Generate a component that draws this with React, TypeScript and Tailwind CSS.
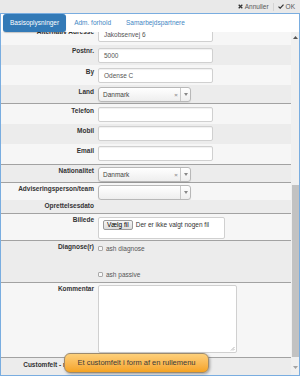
import React from "react";

const font = "font-['Liberation_Sans',Arial,sans-serif]";

function Row({
  label,
  tone,
  h,
  line,
  lpt = "pt-[3px]",
  children,
  extra = "",
}: {
  label: string;
  tone: "light" | "dark";
  h: string;
  line?: boolean;
  lpt?: string;
  children?: React.ReactNode;
  extra?: string;
}) {
  return (
    <div
      className={`flex shrink-0 ${h} ${tone === "light" ? "bg-[#f6f6f6]" : "bg-[#ececec]"} ${
        line ? "border-b border-[#a2a2a2]" : ""
      } ${extra}`}
    >
      <div className={`w-[93px] shrink-0 text-right font-bold text-[#333] leading-[8px] whitespace-nowrap ${lpt}`}>
        {label}
      </div>
      <div className="ml-[4px] pt-[2px]">{children}</div>
    </div>
  );
}

function TextInput({ value = "" }: { value?: string }) {
  return (
    <div className="w-[115px] h-[15px] bg-white border border-[#d0d0d0] rounded-[2px] shadow-[inset_0_1px_1px_rgba(0,0,0,0.06)] flex items-center px-[5px] text-[#555]">
      {value}
    </div>
  );
}

function Select({ value, clear = true }: { value?: string; clear?: boolean }) {
  return (
    <div className="w-[93px] h-[15px] flex rounded-[3px] border border-[#b8b8b8] bg-gradient-to-b from-white to-[#eeeeee] shadow-[0_1px_1px_rgba(0,0,0,0.08)]">
      <div className="flex-1 flex items-center pl-[4px] text-[#444]">{value}</div>
      {clear && <div className="w-[8px] flex items-center justify-center text-[#999] font-bold text-[6px]">×</div>}
      <div className="w-[10px] border-l border-[#c8c8c8] flex items-center justify-center">
        <svg width="4" height="3" viewBox="0 0 4 3">
          <path d="M0 0h4L2 3z" fill="#888" />
        </svg>
      </div>
    </div>
  );
}

function Check({ label }: { label: string }) {
  return (
    <div className="flex items-center gap-[3px] text-[#555] h-[9px]">
      <div className="w-[5px] h-[5px] rounded-[1px] border border-[#aaa] bg-[#f8f8f8]" />
      <span>{label}</span>
    </div>
  );
}

export default function App() {
  return (
    <div className={`w-[300px] h-[376px] bg-white text-[6.5px] leading-[8px] relative overflow-hidden ${font}`}>
      <div className="h-[13px] bg-[#e9e9e9] flex items-center justify-end pr-[5px] text-[#555]">
        <div className="flex items-center gap-[2px]">
          <svg width="5" height="5" viewBox="0 0 5 5">
            <path d="M0.7 0.7L4.3 4.3M4.3 0.7L0.7 4.3" stroke="#333" strokeWidth="1.3" />
          </svg>
          <span>Annuller</span>
        </div>
        <div className="w-px h-[8px] bg-[#d4d4d4] mx-[4px]" />
        <div className="flex items-center gap-[2px]">
          <svg width="6" height="5" viewBox="0 0 6 5">
            <path d="M0.5 2.6L2.2 4.2L5.5 0.7" stroke="#333" strokeWidth="1.2" fill="none" />
          </svg>
          <span>OK</span>
        </div>
      </div>

      <div className="h-[363px] border border-[#79ade0] flex flex-col">
        <div className="h-[18px] shrink-0 flex items-stretch pl-[2px] gap-[1px]">
          <div className="px-[7px] flex items-center bg-[#337ab7] text-white rounded-[3px] shadow-[0_1px_1px_rgba(0,0,0,0.2)] z-10">
            Basisoplysninger
          </div>
          <div className="px-[7px] flex items-center text-[#3f86c4]">Adm. forhold</div>
          <div className="px-[7px] flex items-center text-[#3f86c4]">Samarbejdspartnere</div>
        </div>

        <div className="flex flex-1 min-h-0">
          <div className="flex-1 overflow-hidden flex flex-col">
            <Row label="Alternativ Adresse" tone="light" h="h-[20px]" extra="-mt-[7px]">
              <TextInput value="Jakobsenvej 6" />
            </Row>
            <Row label="Postnr." tone="dark" h="h-[20px]" lpt="pt-[2px]">
              <div className="pt-[1px]">
                <TextInput value="5000" />
              </div>
            </Row>
            <Row label="By" tone="light" h="h-[20px]">
              <div className="pt-[1px]">
                <TextInput value="Odense C" />
              </div>
            </Row>
            <Row label="Land" tone="dark" h="h-[19px]" line>
              <Select value="Danmark" />
            </Row>
            <Row label="Telefon" tone="light" h="h-[20px]">
              <div className="pt-[1px]">
                <TextInput />
              </div>
            </Row>
            <Row label="Mobil" tone="dark" h="h-[20px]">
              <TextInput />
            </Row>
            <Row label="Email" tone="light" h="h-[21px]" line>
              <TextInput />
            </Row>
            <Row label="Nationalitet" tone="dark" h="h-[18px]" line lpt="pt-[2px]">
              <Select value="Danmark" />
            </Row>
            <Row label="Adviseringsperson/team" tone="light" h="h-[17px]" lpt="pt-[2px]">
              <Select clear={false} />
            </Row>
            <Row label="Oprettelsesdato" tone="dark" h="h-[14px]" line lpt="pt-[2px]" />
            <Row label="Billede" tone="light" h="h-[27px]" line lpt="pt-[2px]">
              <div className="pt-[1px]">
                <div className="w-[127px] h-[22px] bg-white border border-[#d0d0d0] rounded-[2px] flex items-start pt-[2px] pl-[4px] gap-[3px] text-[#333]">
                  <div className="h-[10px] px-[3px] flex items-center border border-[#9a9a9a] rounded-[2px] bg-gradient-to-b from-[#f6f6f6] to-[#dcdcdc] text-black">
                    Vælg fil
                  </div>
                  <span className="pt-[1px]">Der er ikke valgt nogen fil</span>
                </div>
              </div>
            </Row>
            <Row label="Diagnose(r)" tone="dark" h="h-[42px]" line lpt="pt-[2px]">
              <div className="pt-[1px] flex flex-col gap-[17px]">
                <Check label="ash diagnose" />
                <Check label="ash passive" />
              </div>
            </Row>
            <Row label="Kommentar" tone="light" h="h-[75px]" line lpt="pt-[2px]">
              <div className="w-[139px] h-[68px] bg-white border border-[#d0d0d0] rounded-[2px] relative">
                <svg className="absolute right-[1px] bottom-[1px]" width="5" height="5" viewBox="0 0 5 5">
                  <path d="M4.5 1L1 4.5M4.5 3L3 4.5" stroke="#999" strokeWidth="0.7" />
                </svg>
              </div>
            </Row>
            <Row label="Customfelt - rullemenu" tone="dark" h="flex-1" lpt="pt-[3px]" />
          </div>

          <div className="w-[8px] shrink-0 bg-[#f0f0f0] flex flex-col">
            <div className="h-[9px] flex items-center justify-center pt-[2px]">
              <svg width="5" height="3" viewBox="0 0 5 3">
                <path d="M0 3h5L2.5 0z" fill="#555" />
              </svg>
            </div>
            <div className="h-[144px]" />
            <div className="h-[172px] ml-[1px] bg-[#c2c2c2]" />
            <div className="flex-1 flex items-center justify-center pt-[2px]">
              <svg width="5" height="3" viewBox="0 0 5 3">
                <path d="M0 0h5L2.5 3z" fill="#a3a3a3" />
              </svg>
            </div>
          </div>
        </div>
      </div>

      <div className="absolute left-[64px] top-[353px] w-[145px] h-[20px] rounded-[6px] border border-[#9c8a6e] bg-gradient-to-b from-[#fdd07a] to-[#f5a31f] shadow-[1px_1px_3px_rgba(0,0,0,0.35)] flex items-center justify-center text-[7.5px] text-[#3a3a3a]">
        Et customfelt i form af en rullemenu
      </div>
    </div>
  );
}
